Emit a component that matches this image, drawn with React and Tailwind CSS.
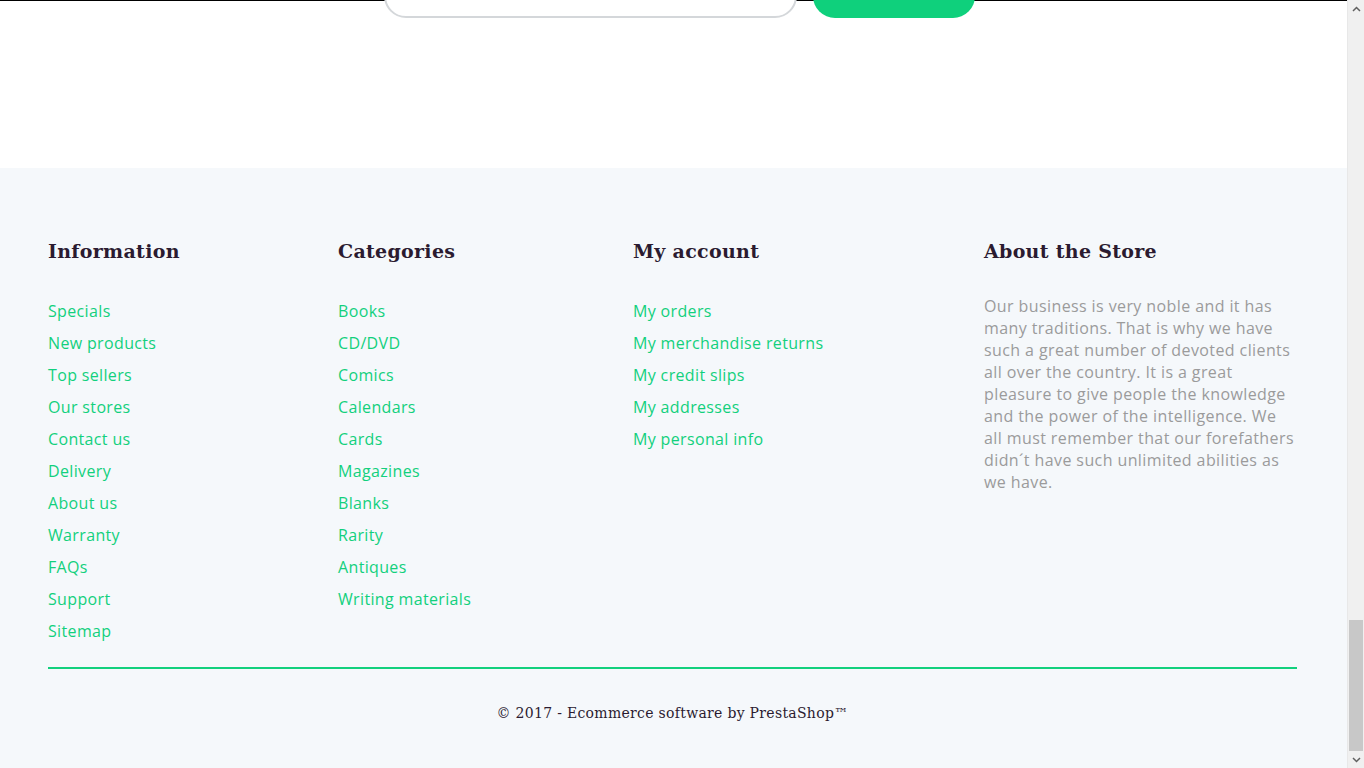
import React from 'react';

const info = ['Specials', 'New products', 'Top sellers', 'Our stores', 'Contact us', 'Delivery', 'About us', 'Warranty', 'FAQs', 'Support', 'Sitemap'];
const categories = ['Books', 'CD/DVD', 'Comics', 'Calendars', 'Cards', 'Magazines', 'Blanks', 'Rarity', 'Antiques', 'Writing materials'];
const account = ['My orders', 'My merchandise returns', 'My credit slips', 'My addresses', 'My personal info'];

const slab = { fontFamily: '"DejaVu Serif", serif' };

const LinkList = ({ items }) => (
  <ul className="flex flex-col">
    {items.map((item) => (
      <li key={item} className="h-8 leading-8">
        <a href="#" className="text-[16px] tracking-[0.35px] text-[#12d07d]">{item}</a>
      </li>
    ))}
  </ul>
);

const Heading = ({ children }) => (
  <h4 className="h-6 leading-6 text-[19px] tracking-[0.3px] font-bold text-[#2b1b30] mb-8" style={slab}>{children}</h4>
);

export default function App() {
  return (
    <div className="flex h-[768px] overflow-hidden bg-white" style={{ fontFamily: '"Open Sans", "Liberation Sans", sans-serif' }}>
      <div className="flex-1 flex flex-col border-t border-black">
        {/* Newsletter remnant */}
        <div className="h-[167px] flex justify-center gap-4 pl-[11px]">
          <div className="w-[413px] h-[44px] -mt-[27px] rounded-full border-2 border-[#d4d7da] bg-white" />
          <div className="w-[162px] h-[44px] -mt-[27px] rounded-full bg-[#0fd07c]" />
        </div>

        {/* Footer */}
        <footer className="flex-1 bg-[#f5f8fb] pl-12 pr-[50px] pt-[71px]">
          <div className="grid grid-cols-[290px_295px_351px_1fr]">
            <div>
              <Heading>Information</Heading>
              <LinkList items={info} />
            </div>
            <div>
              <Heading>Categories</Heading>
              <LinkList items={categories} />
            </div>
            <div>
              <Heading>My account</Heading>
              <LinkList items={account} />
            </div>
            <div>
              <Heading>About the Store</Heading>
              <p className="text-[16px] leading-[22px] tracking-[0.4px] text-[#9b9b9b]">
                Our business is very noble and it has many traditions. That is why we have such a great number of devoted clients all over the country. It is a great pleasure to give people the knowledge and the power of the intelligence. We all must remember that our forefathers didn´t have such unlimited abilities as we have.
              </p>
            </div>
          </div>
          <div className="mt-5 border-t-2 border-[#12d07d]" />
          <p className="mt-[34px] text-center text-[14px] tracking-[0.3px] text-[#2b1b30]" style={slab}>
            © 2017 - Ecommerce software by PrestaShop™
          </p>
        </footer>
      </div>

      {/* Scrollbar */}
      <div className="w-[17px] flex flex-col bg-[#f0f0f0] border-l border-[#e8e8e8]">
        <div className="h-[17px] flex items-center justify-center text-[#606060]">
          <svg width="9" height="6" viewBox="0 0 9 6"><path d="M1 5 L4.5 1.5 L8 5" stroke="currentColor" strokeWidth="1.5" fill="none" /></svg>
        </div>
        <div className="flex-1 flex flex-col justify-end">
          <div className="h-[131px] mx-[1px] bg-[#c8c8c8]" />
        </div>
        <div className="h-[17px] flex items-center justify-center text-[#606060]">
          <svg width="9" height="6" viewBox="0 0 9 6"><path d="M1 1 L4.5 4.5 L8 1" stroke="currentColor" strokeWidth="1.5" fill="none" /></svg>
        </div>
      </div>
    </div>
  );
}
